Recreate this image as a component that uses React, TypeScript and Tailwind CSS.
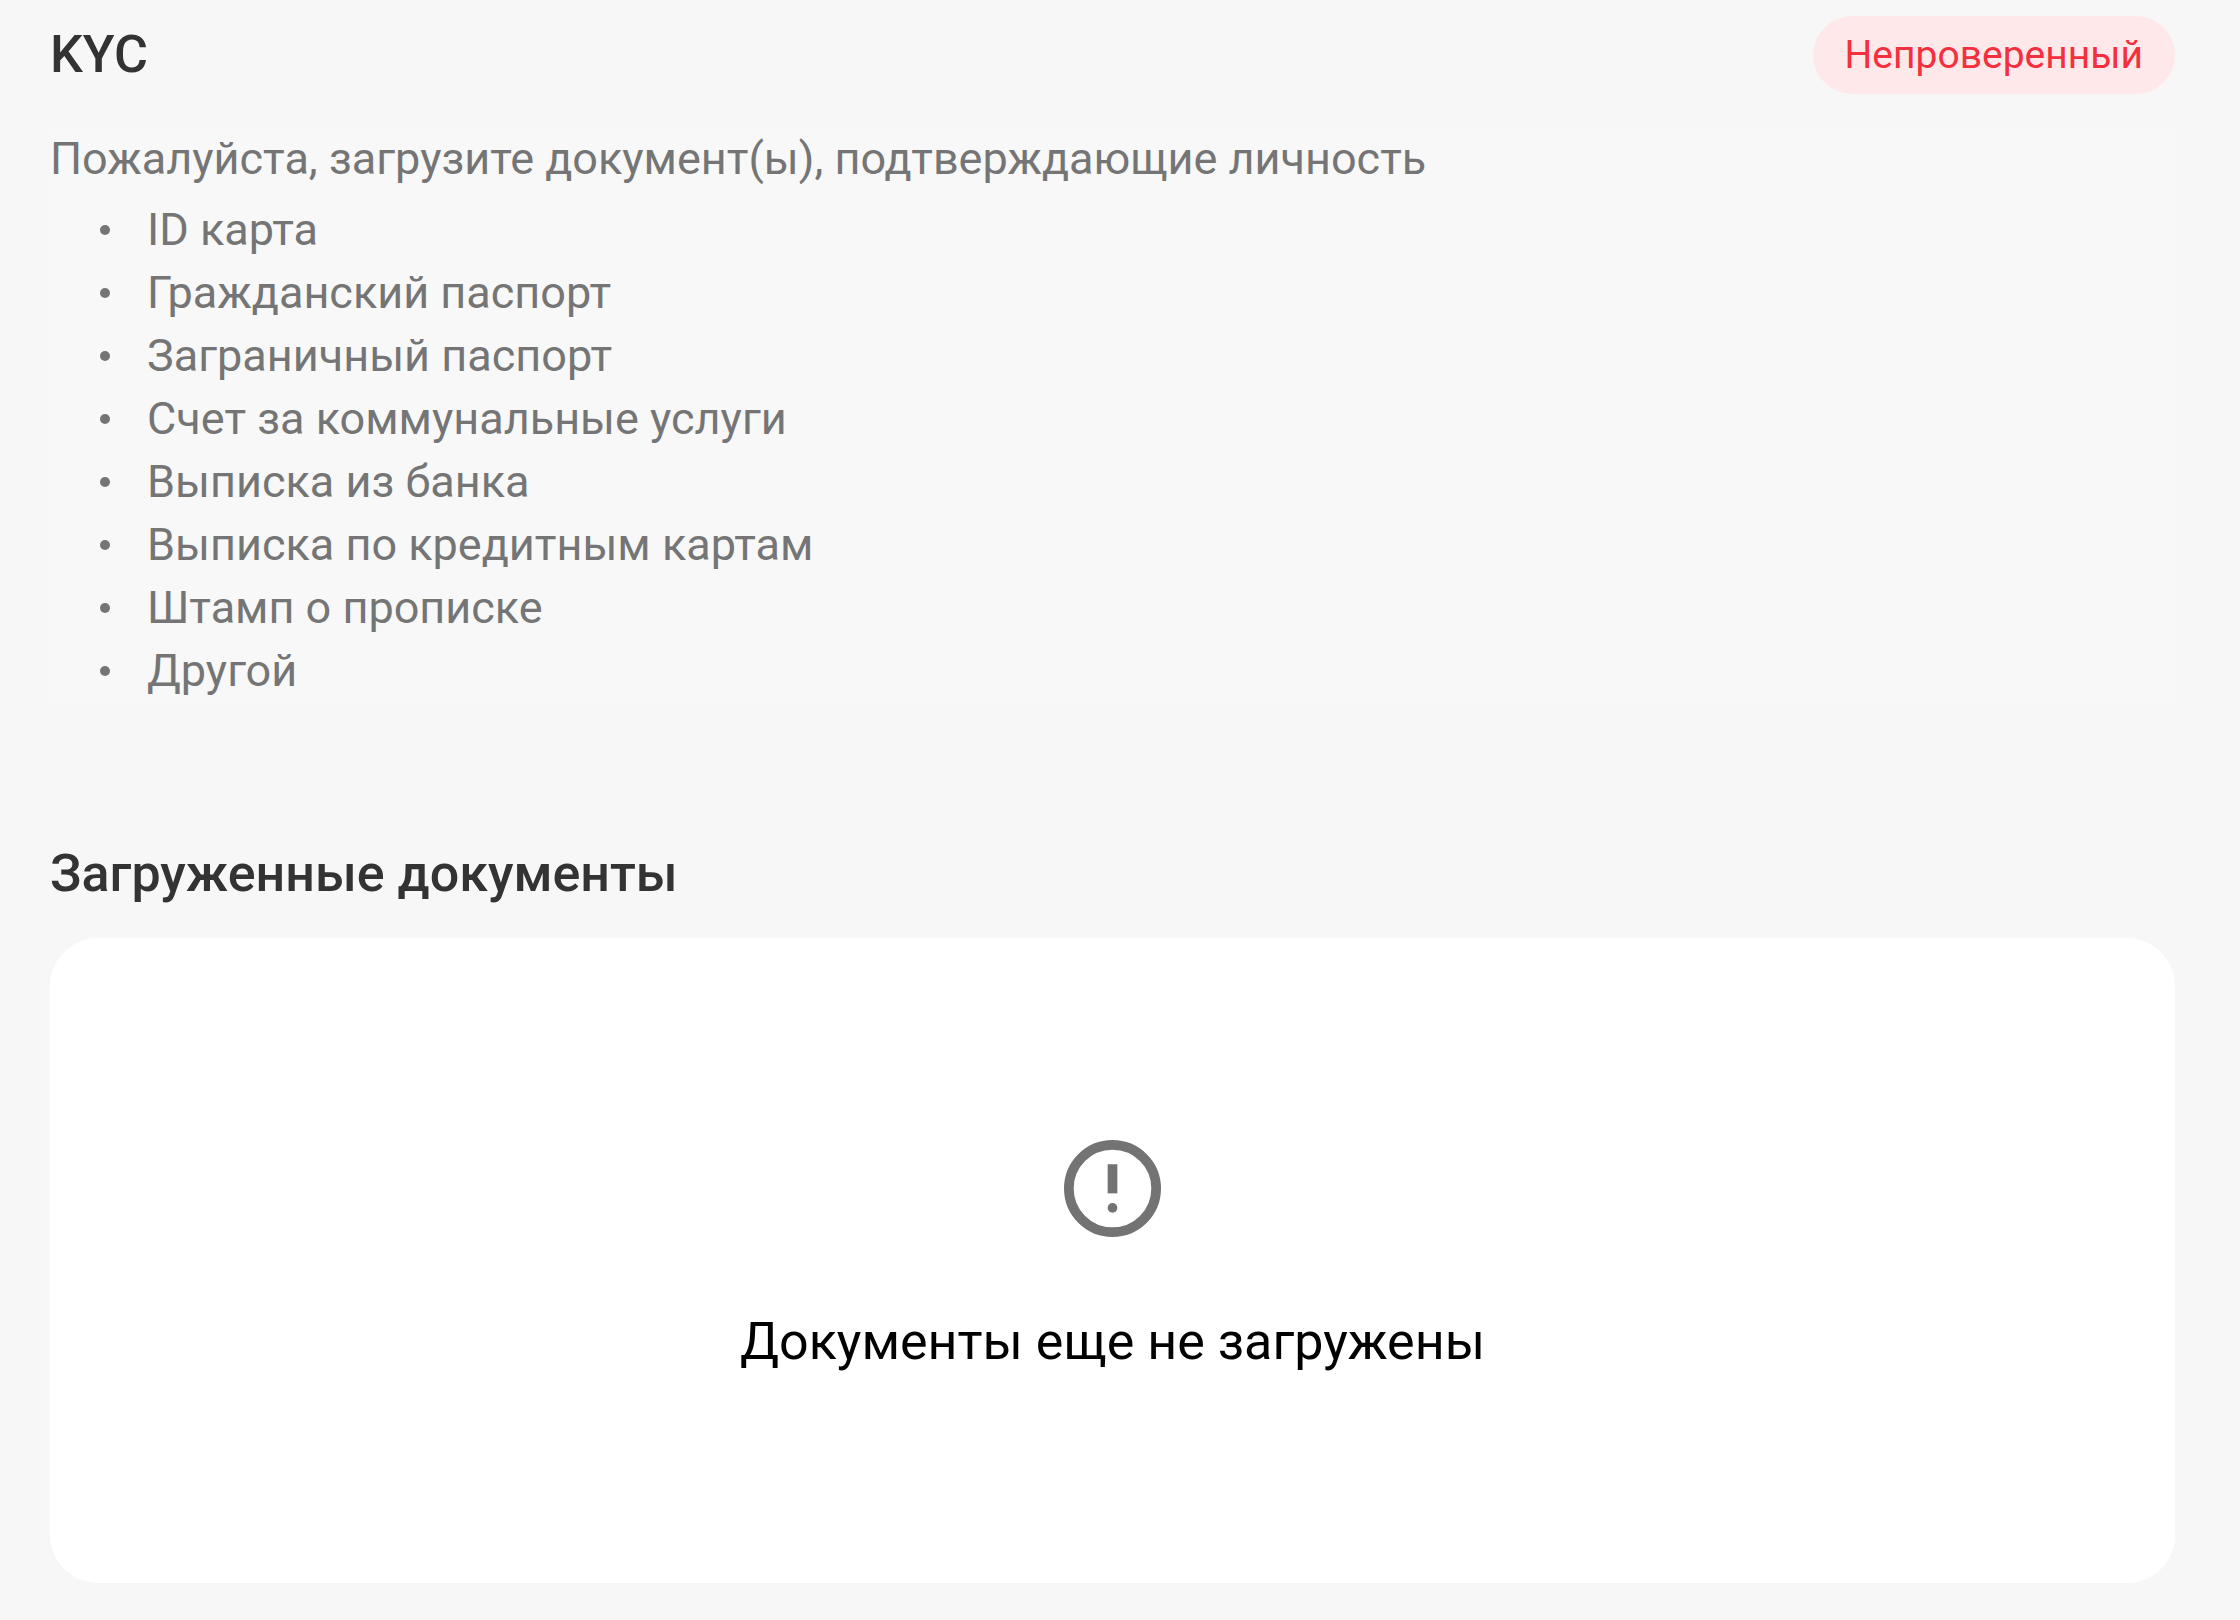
const documentTypes = [
  'ID карта',
  'Гражданский паспорт',
  'Заграничный паспорт',
  'Счет за коммунальные услуги',
  'Выписка из банка',
  'Выписка по кредитным картам',
  'Штамп о прописке',
  'Другой',
];

function ErrorOutlineIcon() {
  return (
    <svg viewBox="0 0 20 20" className="size-[97px] text-[#737373]" fill="none" aria-hidden="true">
      <circle cx="10" cy="10" r="9" stroke="currentColor" strokeWidth="2" />
      <path d="M9 5h2v6H9z" fill="currentColor" />
      <circle cx="10" cy="14" r="1" fill="currentColor" />
    </svg>
  );
}

export default function App() {
  return (
    <main className="min-h-screen bg-[#f7f7f7] pt-[15px] pr-[65px] pb-9 pl-[50px] font-['Roboto',sans-serif]">
      <header className="flex items-center justify-between">
        <h1 className="text-[52px] leading-[80px] font-medium text-[#333333]">KYC</h1>
        <span className="rounded-full bg-[#ffe8e9] px-8 text-[39px] leading-[78px] text-[#f5303e]">
          Непроверенный
        </span>
      </header>

      <section className="mt-8 bg-[#f8f8f8] text-[45px] leading-[63px] text-[#757575]">
        <p>Пожалуйста, загрузите документ(ы), подтверждающие личность</p>
        <ul className="mt-2 pl-[50px]">
          {documentTypes.map((type) => (
            <li
              key={type}
              className="flex items-center gap-[37px] before:size-[10px] before:rounded-full before:bg-[#757575]"
            >
              {type}
            </li>
          ))}
        </ul>
      </section>

      <section className="mt-[142px]">
        <h2 className="text-[52px] leading-[60px] font-medium text-[#333333]">Загруженные документы</h2>
        <div className="mt-[34px] flex h-[645px] flex-col items-center justify-center gap-[65px] rounded-[48px] bg-white">
          <ErrorOutlineIcon />
          <p className="text-[52px] leading-[80px] text-black">Документы еще не загружены</p>
        </div>
      </section>
    </main>
  );
}
